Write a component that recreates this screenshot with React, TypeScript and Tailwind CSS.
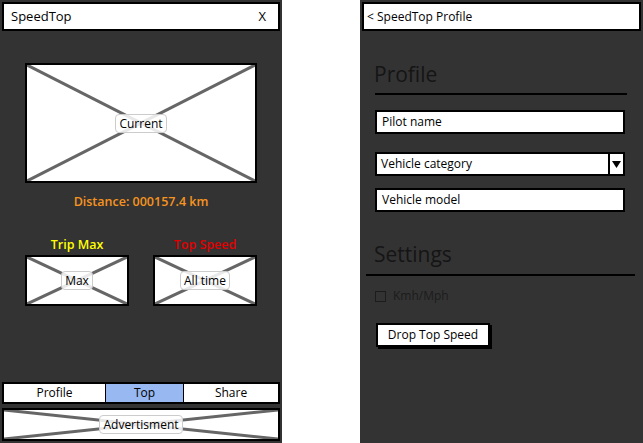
import React from "react";

const font = { fontFamily: "'Open Sans', 'Noto Sans', sans-serif" };

function Placeholder({
  label,
  className,
}: {
  label: string;
  className: string;
}) {
  return (
    <div className={`relative bg-white border-2 border-black ${className}`}>
      <svg
        className="absolute inset-0 h-full w-full"
        preserveAspectRatio="none"
        viewBox="0 0 100 100"
      >
        <line x1="0" y1="0" x2="100" y2="100" stroke="#666" strokeWidth="3" vectorEffect="non-scaling-stroke" />
        <line x1="100" y1="0" x2="0" y2="100" stroke="#666" strokeWidth="3" vectorEffect="non-scaling-stroke" />
      </svg>
      <div className="absolute inset-0 flex items-center justify-center">
        <span className="rounded-[4px] border border-[#ccc] bg-white/85 px-[3px] text-[12px] leading-[17px] text-black">
          {label}
        </span>
      </div>
    </div>
  );
}

function Field({ label }: { label: string }) {
  return (
    <div className="ml-[15px] flex h-[24px] w-[250px] items-center border-2 border-black bg-white px-[5px] text-[12px] text-black">
      {label}
    </div>
  );
}

export default function App() {
  return (
    <div className="flex h-[443px] w-[643px] bg-white" style={font}>
      {/* main screen */}
      <div className="flex h-full w-[282px] flex-col bg-[#333]">
        <div className="mx-[2px] mt-[2px] flex h-[29px] items-center justify-between border-2 border-black bg-white pl-[7px] pr-[12px] text-[13px] text-black">
          <span>SpeedTop</span>
          <span>X</span>
        </div>

        <Placeholder label="Current" className="ml-[25px] mt-[32px] h-[120px] w-[232px]" />

        <div className="mt-[10px] text-center text-[12.5px] font-semibold text-[#f7931e]">
          Distance: 000157.4 km
        </div>

        <div className="mt-[25px] flex gap-[24px] pl-[25px]">
          <div className="flex w-[104px] flex-col items-center">
            <span className="text-[12.5px] font-semibold leading-[16px] text-[#ffff00]">Trip Max</span>
            <Placeholder label="Max" className="mt-[2px] h-[51px] w-[104px]" />
          </div>
          <div className="flex w-[104px] flex-col items-center">
            <span className="text-[12.5px] font-semibold leading-[16px] text-[#e00000]">Top Speed</span>
            <Placeholder label="All time" className="mt-[2px] h-[51px] w-[104px]" />
          </div>
        </div>

        <div className="flex-1" />

        <div className="mx-[2px] flex h-[22px] border-2 border-black bg-white text-[12px] text-black">
          <div className="flex w-[101px] items-center justify-center">Profile</div>
          <div className="flex w-[79px] items-center justify-center border-x border-black bg-[#97b8f0]">Top</div>
          <div className="flex flex-1 items-center justify-center">Share</div>
        </div>

        <Placeholder label="Advertisment" className="mx-[2px] mb-[2px] mt-[4px] h-[33px]" />
      </div>

      <div className="w-[78px]" />

      {/* profile screen */}
      <div className="flex h-full w-[283px] flex-col bg-[#333]">
        <div className="mx-[2px] mt-[2px] flex h-[29px] items-center border-2 border-black bg-white pl-[3px] text-[12px] text-black">
          &lt; SpeedTop Profile
        </div>

        <div className="ml-[14px] mt-[29px] text-[21px] leading-[28px] text-[#151515]">Profile</div>
        <div className="ml-[15px] mt-[5px] h-[2px] w-[252px] bg-black" />

        <div className="mt-[15px]">
          <Field label="Pilot name" />
        </div>

        <div className="ml-[15px] mt-[18px] flex h-[24px] w-[250px] border-2 border-black bg-white text-[12px] text-black">
          <div className="flex flex-1 items-center px-[4px]">Vehicle category</div>
          <div className="flex w-[15px] items-center justify-center border-l-2 border-black">
            <svg width="9" height="8" viewBox="0 0 9 8">
              <path d="M0 1 L9 1 L4.5 8 Z" fill="#000" />
            </svg>
          </div>
        </div>

        <div className="mt-[12px]">
          <Field label="Vehicle model" />
        </div>

        <div className="ml-[14px] mt-[28px] text-[21px] leading-[28px] text-[#151515]">Settings</div>
        <div className="ml-[6px] mt-[6px] h-[2px] w-[269px] bg-black" />

        <div className="ml-[15px] mt-[11px] flex items-center gap-[7px] text-[12px] text-[#1c1c1c]">
          <div className="h-[11px] w-[11px] border border-[#1c1c1c]" />
          <span>Kmh/Mph</span>
        </div>

        <div className="ml-[16px] mt-[18px] flex h-[24px] w-[114px] items-center justify-center border-2 border-black bg-white text-[12px] text-black shadow-[2px_2px_0_#000]">
          Drop Top Speed
        </div>
      </div>
    </div>
  );
}
